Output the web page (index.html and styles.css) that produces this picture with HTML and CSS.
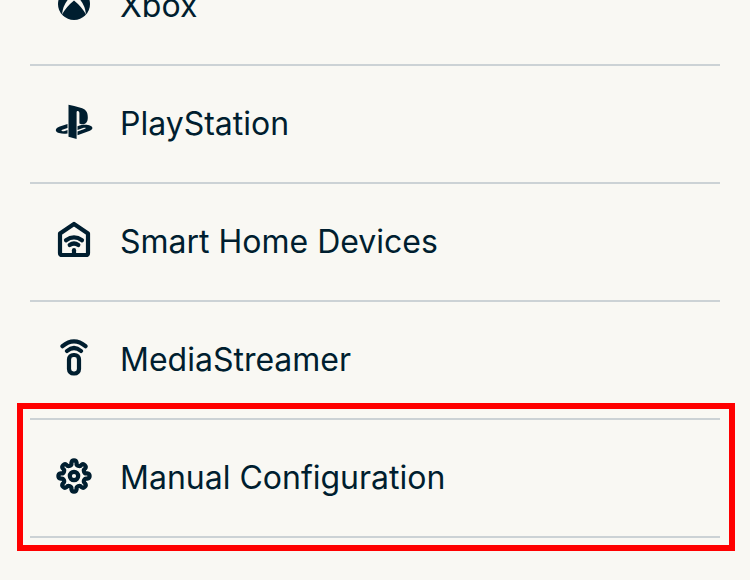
FILE: index.html
```html
<!DOCTYPE html>
<html lang="en">
<head>
<meta charset="utf-8">
<title>Devices</title>
<link rel="stylesheet" href="styles.css">
</head>
<body>
<ul class="devices">
  <li class="device">
    <svg class="icon" viewBox="0 0 50 50"><circle cx="24" cy="24" r="16" fill="currentColor"/><path class="cut" d="M15 11Q20 11 24 15Q28 11 33 11Q29 13 27 16.5Q35 23.5 36 34.5Q31.5 26.5 24 20.5Q16.5 26.5 12 34.5Q13 23.5 21 16.5Q19 13 15 11Z"/></svg>
    <span class="label">Xbox</span>
  </li>
  <li class="device">
    <svg class="icon" viewBox="0 0 50 50"><g fill="currentColor"><path d="M18.5 6.8V38.8L26.6 41V14.2C26.6 12.3 29.4 12.5 29.4 15V25.4C34.3 27.6 37.8 25.4 37.8 19.5C37.8 13.4 35.4 11.3 30.5 9.8Q24 7.8 18.5 6.8Z"/><path d="M17.5 26L9.8 28.5C4.8 30.2 4.5 33.7 9 35Q13 36.2 17.5 35.5V32L14.8 32.9C11.5 33.6 10.2 32.6 13 31.6L17.5 30Z"/><path d="M27.5 28.2C33 26.3 37.5 26.5 40.3 27.8C43.7 29.2 42.8 31.8 39.2 33.1L27.5 37.2V33.5L35 30.8C37 30 35 29.5 33 30.1L27.5 32Z"/></g></svg>
    <span class="label">PlayStation</span>
  </li>
  <li class="device">
    <svg class="icon" viewBox="0 0 50 50"><g class="line"><path d="M24 8L10 17.5V37Q10 39 12 39H36Q38 39 38 37V17.5Z"/><path d="M16 24.3Q24 18.5 32 24.3M19.7 29Q24 26 28.3 29"/><path d="M24 34.2V39"/></g></svg>
    <span class="label">Smart Home Devices</span>
  </li>
  <li class="device">
    <svg class="icon" viewBox="0 0 50 50"><g class="line"><path d="M12.5 12.2Q24 2.5 35.5 12.2M17 17Q24 11 31 17"/><rect x="19" y="21" width="10" height="18.5" rx="4.5"/></g></svg>
    <span class="label">MediaStreamer</span>
  </li>
  <li class="device selected">
    <svg class="icon" viewBox="-24 -24 50 50"><g class="line"><path d="M-2.61-13.14A2.65 3 0 0 1 2.61-13.14A2.65 2.65 0 0 0 7.44-11.14A2.65 2.65 0 0 1 11.14-7.44A2.65 2.65 0 0 0 13.14-2.61A3 2.65 0 0 1 13.14 2.61A2.65 2.65 0 0 0 11.14 7.44A2.65 2.65 0 0 1 7.44 11.14A2.65 2.65 0 0 0 2.61 13.14A2.65 3 0 0 1-2.61 13.14A2.65 2.65 0 0 0-7.44 11.14A2.65 2.65 0 0 1-11.14 7.44A2.65 2.65 0 0 0-13.14 2.61A3 2.65 0 0 1-13.14-2.61A2.65 2.65 0 0 0-11.14-7.44A2.65 2.65 0 0 1-7.44-11.14A2.65 2.65 0 0 0-2.61-13.14Z"/><circle r="4.2"/></g></svg>
    <span class="label">Manual Configuration</span>
  </li>
</ul>
</body>
</html>
```
FILE: styles.css
```css
body {
  margin: 0;
  height: 580px;
  overflow: hidden;
  background: #f9f8f3;
  color: #001e2f;
  font-family: Inter, "Liberation Sans", sans-serif;
}
.devices {
  list-style: none;
  margin: -52px 30px 0;
  padding: 0;
}
.device {
  position: relative;
  box-sizing: border-box;
  height: 118px;
  padding: 0 0 2px 20px;
  border-bottom: 2px solid #ccd2d5;
  display: flex;
  align-items: center;
  gap: 20px;
}
.icon {
  width: 50px;
  height: 50px;
  flex: none;
}
.line {
  fill: none;
  stroke: currentColor;
  stroke-width: 4.2;
  stroke-linecap: round;
  stroke-linejoin: round;
}
.cut {
  fill: #f9f8f3;
}
.label {
  padding-top: 2px;
  font-size: 32px;
  line-height: 40px;
  white-space: nowrap;
}
/* Highlight frame around the selected row */
.selected::after {
  content: "";
  position: absolute;
  inset: -17px -15px -15px -13px;
  border: 6px solid #f00;
}
```
